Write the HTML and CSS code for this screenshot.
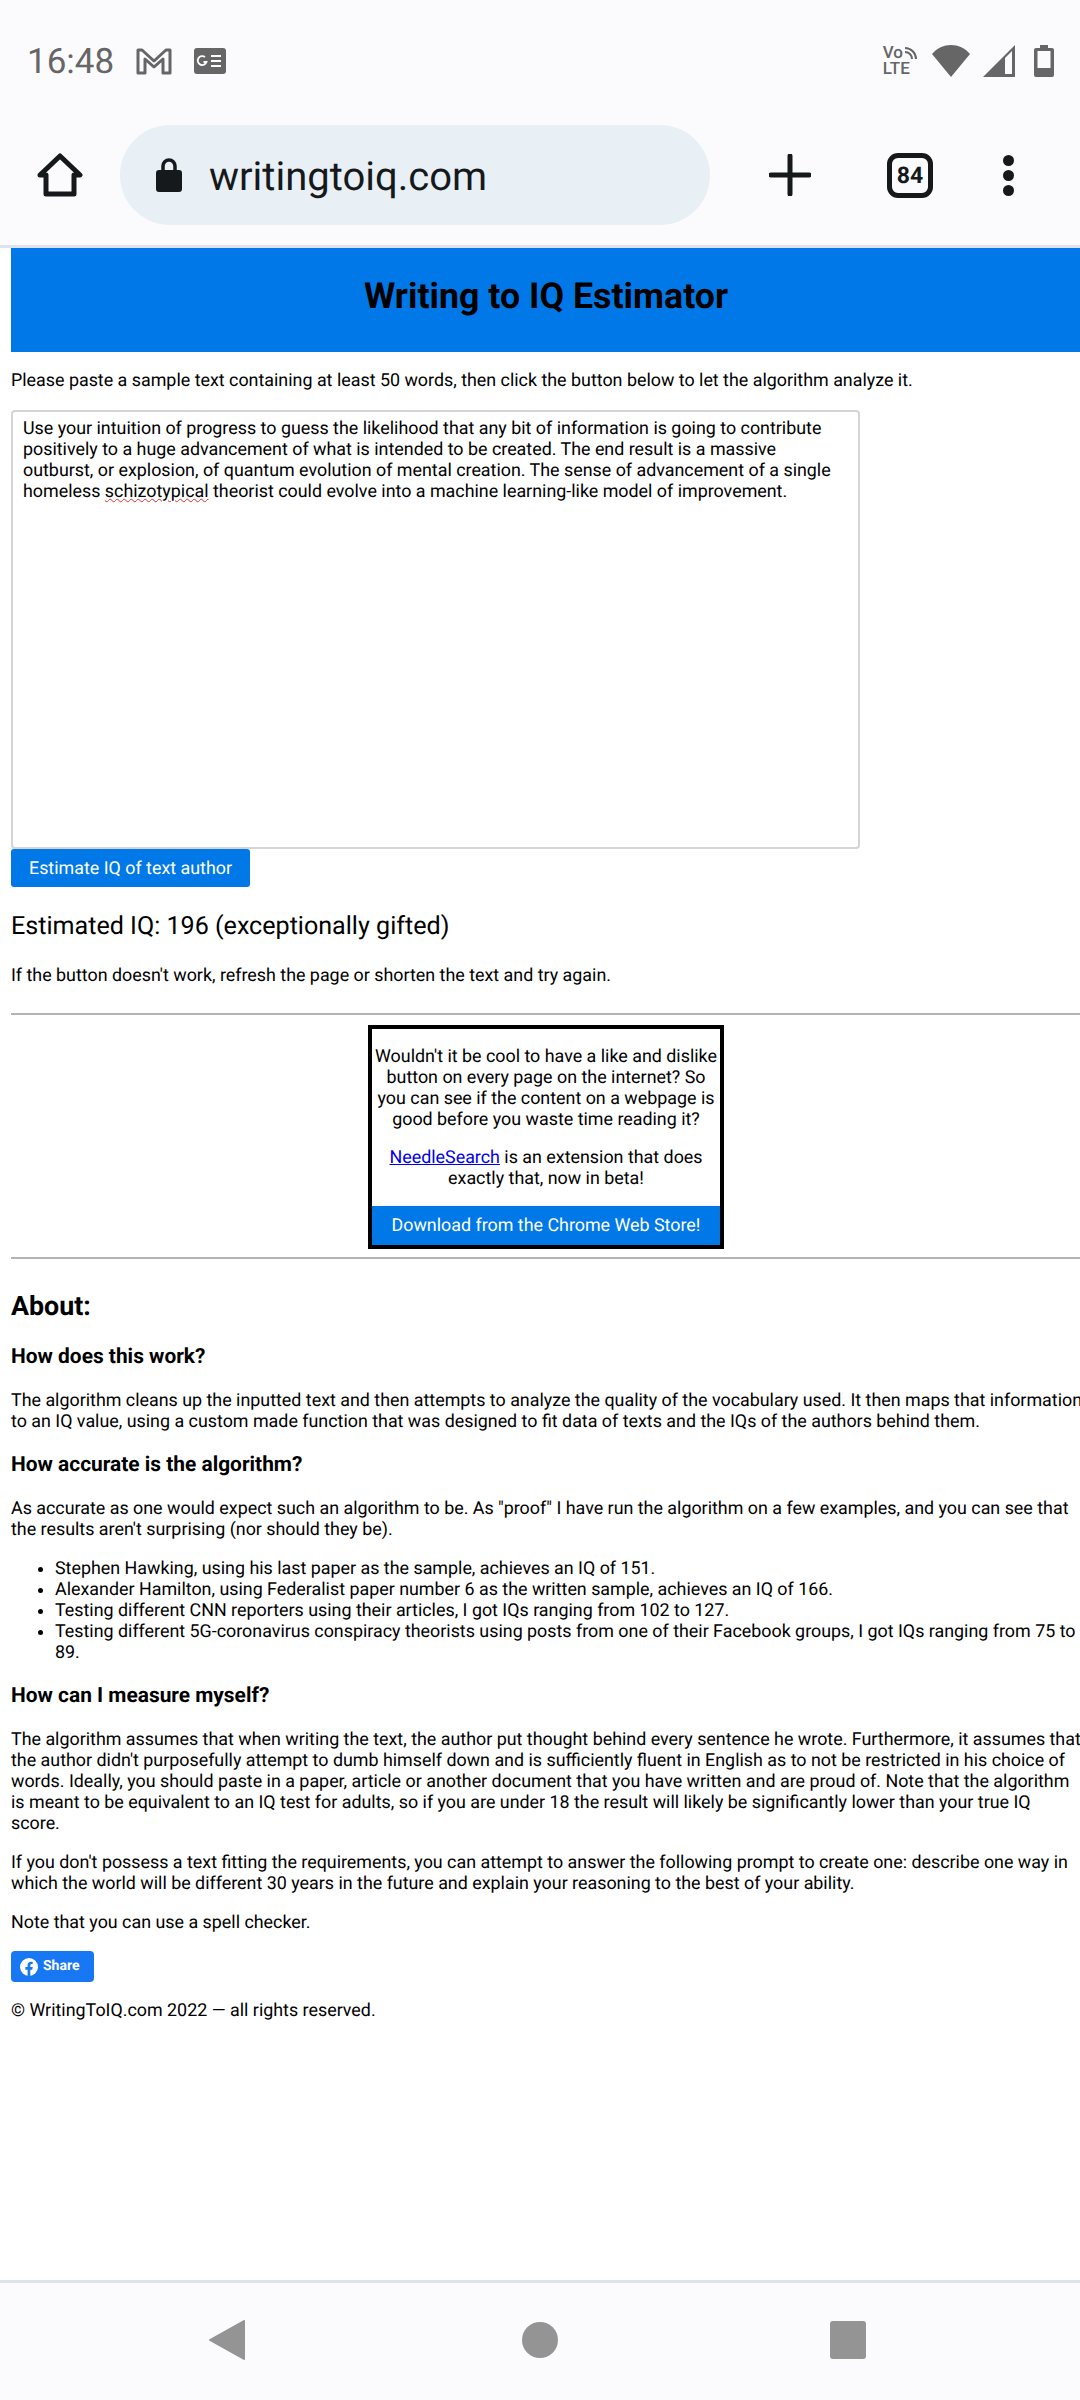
FILE: index.html
```html
<!DOCTYPE html>
<html lang="en">
<head>
  <meta charset="UTF-8">
  <title>Writing to IQ Estimator</title>
  <link rel="stylesheet" href="styles.css">
</head>
<body>
  <div class="phone">
    <div class="status-bar">
      <div class="status-left">
        <span class="time">16:48</span>
        <svg class="ic-gmail" width="36" height="28" viewBox="0 0 36 28"><path d="M2 26V3h4l12 11L30 3h4v23h-7V12l-9 8-9-8v14z" fill="none" stroke="#666" stroke-width="3" stroke-linejoin="round"/></svg>
        <svg class="ic-news" width="32" height="26" viewBox="0 0 32 26"><rect width="32" height="26" rx="3" fill="#666"/><path d="M11 9a4.500 4.500 0 1 0 1.500 5H9.500" fill="none" stroke="#fff" stroke-width="1.800"/><path d="M17 8h10M17 13h10M17 18h10" stroke="#fff" stroke-width="2"/></svg>
      </div>
      <div class="status-right">
        <div class="volte">
          <div class="vo">Vo<svg width="13" height="13" viewBox="0 0 13 13"><path d="M1 5a7 7 0 0 1 7 7M1 1a11 11 0 0 1 11 11" fill="none" stroke="#666" stroke-width="2"/></svg></div>
          <div>LTE</div>
        </div>
        <svg width="40" height="32" viewBox="0 0 40 32"><path d="M20 32 1 9C6 3 13 0 20 0s14 3 19 9z" fill="#666"/></svg>
        <svg class="ic-signal" width="32" height="32" viewBox="0 0 32 32"><path d="M32 0v32H0z" fill="#666"/><path d="M22 13l7-7v23h-7z" fill="#fbfbfe"/></svg>
        <svg width="20" height="32" viewBox="0 0 20 32"><path d="M6 0h8v3h4a2 2 0 0 1 2 2v25a2 2 0 0 1-2 2H2a2 2 0 0 1-2-2V5a2 2 0 0 1 2-2h4z" fill="#666"/><rect x="3.500" y="6" width="13" height="17" fill="#fbfbfe"/></svg>
      </div>
    </div>

    <div class="toolbar">
      <svg class="ic-home" width="46" height="46" viewBox="0 0 46 46"><path d="M3 23 23 4l20 19h-6v19H9V23z" fill="none" stroke="#15191c" stroke-width="5" stroke-linejoin="round"/></svg>
      <div class="url-bar">
        <svg width="28" height="36" viewBox="0 0 28 36"><path d="M8 14V9a6 6 0 0 1 12 0v5" fill="none" stroke="#15191c" stroke-width="3.500"/><rect x="1" y="13" width="26" height="22" rx="3" fill="#15191c"/></svg>
        <span>writingtoiq.com</span>
      </div>
      <svg class="ic-plus" width="42" height="42" viewBox="0 0 42 42"><path d="M21 2v38M2 21h38" stroke="#15191c" stroke-width="5" stroke-linecap="round"/></svg>
      <div class="tabs">84</div>
      <div class="dots"><i></i><i></i><i></i></div>
    </div>

    <div class="page">
      <div class="title">Writing to IQ Estimator</div>
      <p class="intro">Please paste a sample text containing at least 50 words, then click the button below to let the algorithm analyze it.</p>
      <div class="textarea">Use your intuition of progress to guess the likelihood that any bit of information is going to contribute positively to a huge advancement of what is intended to be created. The end result is a massive outburst, or explosion, of quantum evolution of mental creation. The sense of advancement of a single homeless <span class="misspelt">schizotypical</span> theorist could evolve into a machine learning-like model of improvement.</div>
      <div class="estimate-btn">Estimate IQ of text author</div>
      <div class="result">Estimated IQ: 196 (exceptionally gifted)</div>
      <p class="hint">If the button doesn't work, refresh the page or shorten the text and try again.</p>
      <hr>
      <div class="promo">
        <p>Wouldn't it be cool to have a like and dislike button on every page on the internet? So you can see if the content on a webpage is good before you waste time reading it?</p>
        <p><a href="#">NeedleSearch</a> is an extension that does exactly that, now in beta!</p>
        <div class="promo-btn">Download from the Chrome Web Store!</div>
      </div>
      <hr class="hr-low">

      <h2>About:</h2>
      <h3>How does this work?</h3>
      <p class="overflowing">The algorithm cleans up the inputted text and then attempts to analyze the quality of the vocabulary used. It then maps that information to an IQ value, using a custom made function that was designed to fit data of texts and the IQs of the authors behind them.</p>
      <h3>How accurate is the algorithm?</h3>
      <p>As accurate as one would expect such an algorithm to be. As "proof" I have run the algorithm on a few examples, and you can see that the results aren't surprising (nor should they be).</p>
      <ul>
        <li>Stephen Hawking, using his last paper as the sample, achieves an IQ of 151.</li>
        <li>Alexander Hamilton, using Federalist paper number 6 as the written sample, achieves an IQ of 166.</li>
        <li>Testing different CNN reporters using their articles, I got IQs ranging from 102 to 127.</li>
        <li>Testing different 5G-coronavirus conspiracy theorists using posts from one of their Facebook groups, I got IQs ranging from 75 to 89.</li>
      </ul>
      <h3>How can I measure myself?</h3>
      <p>The algorithm assumes that when writing the text, the author put thought behind every sentence he wrote. Furthermore, it assumes that the author didn't purposefully attempt to dumb himself down and is sufficiently fluent in English as to not be restricted in his choice of words. Ideally, you should paste in a paper, article or another document that you have written and are proud of. Note that the algorithm is meant to be equivalent to an IQ test for adults, so if you are under 18 the result will likely be significantly lower than your true IQ score.</p>
      <p>If you don't possess a text fitting the requirements, you can attempt to answer the following prompt to create one: describe one way in which the world will be different 30 years in the future and explain your reasoning to the best of your ability.</p>
      <p>Note that you can use a spell checker.</p>
      <div class="fb-share">
        <svg width="18" height="18" viewBox="0 0 18 18"><circle cx="9" cy="9" r="9" fill="#fff"/><path d="M7.600 18v-6.300H5.400V9h2.200V7.200c0-2.300 1.300-3.500 3.300-3.500.9 0 1.800.2 1.800.2v2.200h-1c-1 0-1.400.7-1.400 1.300V9h2.400l-.4 2.700h-2V18z" fill="#1877f2"/></svg>
        <span>Share</span>
      </div>
      <p class="copyright">© WritingToIQ.com 2022 — all rights reserved.</p>
    </div>

    <div class="nav-bar">
      <svg width="36" height="40" viewBox="0 0 36 40"><path d="M35 1v38L1 20z" fill="#949494" stroke="#949494" stroke-width="2" stroke-linejoin="round"/></svg>
      <svg width="36" height="36" viewBox="0 0 36 36"><circle cx="18" cy="18" r="18" fill="#949494"/></svg>
      <svg class="ic-square" width="36" height="38" viewBox="0 0 36 38"><rect width="36" height="38" rx="3" fill="#949494"/></svg>
    </div>
  </div>
</body>
</html>
```

FILE: styles.css
```css
html, body {
  margin: 0;
  padding: 0;
  background: #fff;
}

body {
  font-family: Roboto, "Liberation Sans", sans-serif;
  color: #000;
  text-rendering: geometricPrecision;
}

.phone {
  width: 1080px;
  height: 2400px;
  display: flex;
  flex-direction: column;
  overflow: hidden;
}

.status-bar {
  height: 122px;
  flex: none;
  background: #fbfbfe;
  display: flex;
  justify-content: space-between;
  align-items: center;
  padding: 0 26px 0 27px;
  box-sizing: border-box;
}

.status-left,
.status-right {
  display: flex;
  align-items: center;
}

.time {
  font-size: 35px;
  color: #666;
  margin-right: 22px;
}

.ic-gmail {
  margin-right: 22px;
}

.status-right {
  gap: 12px;
}

.ic-signal {
  margin-right: 7px;
}

.volte {
  display: flex;
  flex-direction: column;
  font-size: 17px;
  line-height: 16px;
  color: #666;
  font-weight: 500;
  margin-right: 2px;
}

.vo {
  display: flex;
  align-items: center;
  gap: 1px;
}

.toolbar {
  height: 123px;
  flex: none;
  background: #fbfbfe;
  display: flex;
  align-items: center;
  padding: 0 0 17px 37px;
  box-sizing: border-box;
}

.ic-home {
  flex: none;
}

.url-bar {
  width: 590px;
  height: 100px;
  margin-left: 37px;
  border-radius: 50px;
  background: #e8eff5;
  display: flex;
  align-items: center;
  padding-left: 35px;
  box-sizing: border-box;
  font-size: 40px;
  color: #15191c;
}

.url-bar span {
  margin: 2px 0 0 26px;
}

.ic-plus {
  margin-left: 59px;
}

.tabs {
  width: 46px;
  height: 45px;
  margin-left: 76px;
  box-sizing: border-box;
  border: 5px solid #15191c;
  border-radius: 11px;
  font-size: 23px;
  font-weight: 700;
  color: #15191c;
  display: flex;
  align-items: center;
  justify-content: center;
}

.dots {
  margin-left: 70px;
  display: flex;
  flex-direction: column;
  gap: 4px;
}

.dots i {
  width: 11px;
  height: 11px;
  border-radius: 50%;
  background: #15191c;
}

.page {
  flex: 1;
  border-top: 3px solid #dee3ea;
  padding-left: 11px;
  width: 1070px;
  font-size: 17.875px;
  line-height: 21px;
}

.title {
  height: 104px;
  background: #0078e7;
  font-size: 35.750px;
  font-weight: 700;
  padding-bottom: 8px;
  box-sizing: border-box;
  display: flex;
  align-items: center;
  justify-content: center;
}

.page p {
  margin: 18px 0;
}

/* this line runs a little past the right edge of the screen */
.page .overflowing {
  margin-right: -4px;
}

.page .intro {
  margin: 18px 0 19px;
}

.textarea {
  width: 849px;
  height: 439px;
  box-sizing: border-box;
  border: 2px solid #d5d5d5;
  border-radius: 4px;
  padding: 6px 10px;
}

.misspelt {
  text-decoration: underline wavy #e03030 1px;
}

.estimate-btn {
  width: 239px;
  height: 38px;
  background: #0078e7;
  color: #fff;
  border-radius: 3px;
  display: flex;
  align-items: center;
  justify-content: center;
}

.result {
  font-size: 25.100px;
  line-height: 30px;
  margin-top: 25px;
}

.page .hint {
  margin: 23px 0 27px;
}

hr {
  margin: 0 0 10px;
  border: none;
  border-top: 2px solid #b4b4b4;
}

.hr-low {
  margin: 8px 0 0;
}

.promo {
  width: 356px;
  margin: 0 auto;
  border: 4px solid #000;
  box-sizing: border-box;
  text-align: center;
}

.page .promo p {
  margin: 17px 3px;
}

.promo-btn {
  height: 39px;
  background: #0078e7;
  color: #fff;
  display: flex;
  align-items: center;
  justify-content: center;
}

h2 {
  font-size: 26.800px;
  line-height: 30px;
  margin: 32px 0 24px;
}

h3 {
  font-size: 20.900px;
  line-height: 24px;
  margin: 21px 0;
}

ul {
  margin: 18px 0;
  padding-left: 44px;
}

.fb-share {
  width: 83px;
  height: 31px;
  background: #1877f2;
  border-radius: 4px;
  color: #fff;
  font-size: 14px;
  font-weight: 700;
  display: flex;
  align-items: center;
  gap: 5px;
  padding-left: 9px;
  box-sizing: border-box;
}

.nav-bar {
  height: 120px;
  flex: none;
  background: #fbfbfe;
  border-top: 3px solid #dee3ea;
  display: flex;
  align-items: center;
  padding: 0 0 3px 209px;
  gap: 277px;
  box-sizing: border-box;
}

.ic-square {
  margin-left: -5px;
}
```
